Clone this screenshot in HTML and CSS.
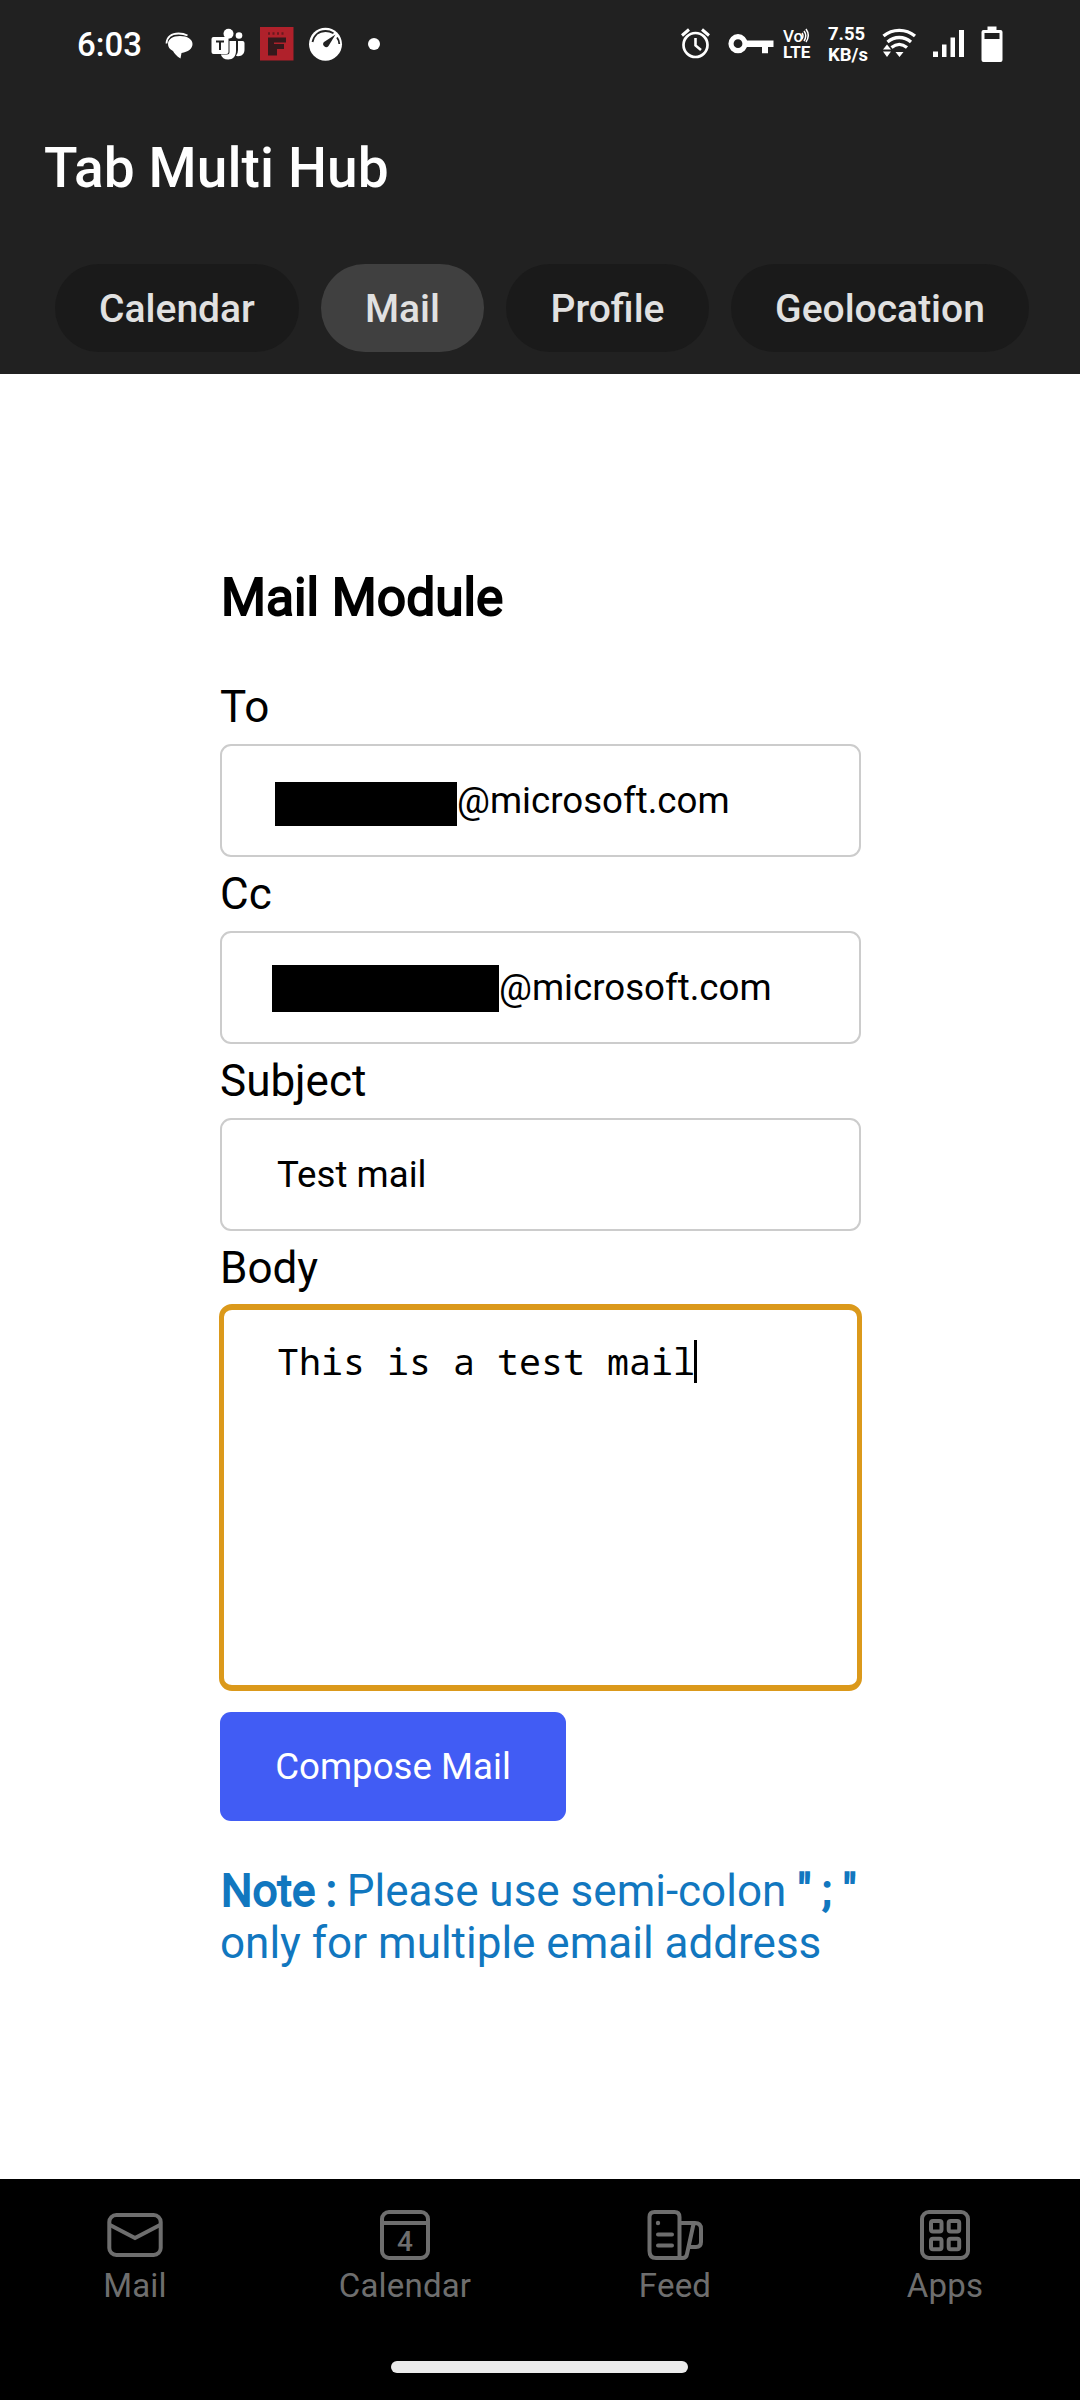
FILE: index.html
```html
<!DOCTYPE html>
<html lang="en">
<head>
<meta charset="utf-8">
<title>Tab Multi Hub</title>
<link rel="stylesheet" href="styles.css">
</head>
<body>
<header class="header">
  <div class="status">
    <div class="status-left">
      <span class="clock">6:03</span>
      <svg class="chat" width="28" height="40" viewBox="165 24 28 40"><path d="M180 36c7.500 0 12.500 3.300 12.500 8s-4.500 8-11 9l-1 5.500c-4-2.500-6-5-7.500-7.500-3.500-1.700-5-4-5-7 0-4.700 4.500-8 12-8z" fill="#fff"/><path d="M166.500 43.500c.3-6.500 5.200-10 12-10 3.500 0 6.500.7 9 2" fill="none" stroke="#fff" stroke-width="1.800"/></svg>
      <svg class="teams" width="34" height="40" viewBox="211 24 34 40"><g fill="#fff"><circle cx="228.500" cy="33.800" r="5"/><circle cx="239" cy="35.500" r="3.300"/><path d="M229.500 41h6.500v10c0 5-3 8.500-7.800 8.500-4 0-6.400-2-7.400-5h6.200q2.500 0 2.500-2.500zM238 41h4.500q2 0 2 2v6.500c0 4-2.300 6.700-6.500 6.700-.9 0-1.500-.2-2-.4q2-2.500 2-5.800z"/><rect x="211.500" y="37" width="17" height="17" rx="2"/></g><path d="M216 41.500h8M220 41.500v8.500" stroke="#222" stroke-width="2" fill="none"/></svg>
      <svg class="flip" width="34" height="40" viewBox="260 24 34 40"><path d="M260 27h33.500v33.500H260z" fill="#b0212b"/><path d="M268 37.500h18v5h-12v1.500h10v5h-7v6.500h-9z" fill="#35191c"/><path d="M268 33.500h18" stroke="#69191f" stroke-width="2.500" stroke-dasharray="2 2.500"/></svg>
      <svg class="gauge" width="34" height="40" viewBox="309 24 34 40"><circle cx="325.500" cy="44.200" r="16.500" fill="#fff"/><path d="M312.500 42c1.500-7 6.500-11 13-11 3 0 5.500.8 8 2.200M337 37.500q2.300 3 2.300 6.500" fill="none" stroke="#222" stroke-width="1.800"/><path d="M335.500 34.500l-7 11.500a3 3 0 1 1-4.500-4z" fill="#222"/></svg>
      <svg class="dot" width="12" height="40" viewBox="368 24 12 40"><circle cx="374" cy="44" r="6" fill="#fff"/></svg>
    </div>
    <div class="status-right">
      <svg width="29" height="40" viewBox="681 24 29 40"><g fill="none" stroke="#fff"><circle cx="695.500" cy="45" r="12" stroke-width="2.700"/><path d="M695.500 38v7.500l5.500 4.500" stroke-width="2.600"/><path d="M682 35.500l7-6M709 35.500l-7-6" stroke-width="3"/></g></svg>
      <svg width="46" height="40" viewBox="728 24 46 40"><circle cx="738" cy="43.700" r="7" fill="none" stroke="#fff" stroke-width="5.200"/><path d="M746 40.500h27.500v6.500h-5.500v6.300h-6V47h-16z" fill="#fff"/></svg>
      <div class="volte"><span>Vo<svg class="waves" width="8" height="15" viewBox="0 0 8 15"><path d="M1 5q2 2.500 0 6M3 3q3.500 4.500 0 10M5 1q4.500 6.500 0 13" fill="none" stroke="#fff" stroke-width="1.500"/></svg></span><span>LTE</span></div>
      <div class="speed"><span>7.55</span><span>KB/s</span></div>
      <svg class="wifi" width="36" height="40" viewBox="882 24 36 40"><g fill="none" stroke="#fff" stroke-width="3.300"><path d="M883.500 36c9-7.500 22.500-7.500 31.500 0"/><path d="M887.500 42c7-6 16.500-6 23.500 0"/><path d="M891.500 47.500c5-4 10.500-4 15.500 0"/></g><path d="M895.500 52h8l-4 5zM883 49.500h8l-4-5zM883 51.500h8l-4 5.500z" fill="#fff"/></svg>
      <svg class="signal" width="32" height="40" viewBox="933 24 32 40"><path d="M933 51.500h5V57h-5zM942 44.500h4.500V57H942zM950.500 37.500h4.500V57h-4.500zM959 30h5v27h-5z" fill="#fff"/></svg>
      <svg class="battery" width="22" height="40" viewBox="981.500 24 22 40"><path fill-rule="evenodd" d="M988 26.500h9V30h4q2 0 2 2v28q0 2-2 2h-17q-2 0-2-2V32q0-2 2-2h4zM985 33v6h15v-6z" fill="#fff"/></svg>
    </div>
  </div>
  <h1 class="title">Tab Multi Hub</h1>
  <nav class="chips">
    <a class="chip chip-calendar">Calendar</a>
    <a class="chip chip-mail active">Mail</a>
    <a class="chip chip-profile">Profile</a>
    <a class="chip chip-geo">Geolocation</a>
  </nav>
</header>
<main class="main">
  <form class="form">
    <h2 class="heading">Mail Module</h2>
    <label class="label">To</label>
    <div class="field"><span class="redact redact-to"></span><span>@microsoft.com</span></div>
    <label class="label">Cc</label>
    <div class="field"><span class="redact redact-cc"></span><span>@microsoft.com</span></div>
    <label class="label">Subject</label>
    <div class="field field-subject"><span>Test mail</span></div>
    <label class="label">Body</label>
    <div class="area"><span class="area-text">This is a test mail</span><span class="caret"></span></div>
    <button class="compose" type="button">Compose Mail</button>
    <p class="note"><b>Note :</b> Please use semi-colon <b>" ; "</b><br>only for multiple email address</p>
  </form>
</main>
<footer class="footer">
  <nav class="tabs">
    <a class="tab"><svg width="60" height="54" viewBox="105 2208 60 54"><g fill="none" stroke="#6e6e6e" stroke-width="4"><rect x="109.300" y="2215" width="51.400" height="40" rx="7"/><path d="M110 2225l25 13 25-13"/></g></svg><span>Mail</span></a>
    <a class="tab"><svg width="60" height="54" viewBox="375 2208 60 54"><g fill="none" stroke="#6e6e6e" stroke-width="4"><rect x="382" y="2212" width="46" height="46" rx="7"/><path d="M382 2223h46"/></g><text class="day" x="405" y="2250.500" text-anchor="middle">4</text></svg><span>Calendar</span></a>
    <a class="tab"><svg width="60" height="54" viewBox="645 2208 60 54"><g fill="none" stroke="#6e6e6e" stroke-width="4" stroke-linecap="round" stroke-linejoin="round"><path d="M680 2258h-24q-6.500 0-6.500-7v-34q0-5 5-5h20q5 0 5 5v41h3q4 0 4.500-4l6.500-30M680 2223h15q6 0 6 6v13q0 5-5 5h-7"/><path d="M658 2234.500h14M658 2245.500h14"/></g><circle cx="658" cy="2223" r="2.200" fill="#6e6e6e"/></svg><span>Feed</span></a>
    <a class="tab"><svg width="60" height="54" viewBox="915 2208 60 54"><g fill="none" stroke="#6e6e6e" stroke-width="4"><rect x="922" y="2212" width="46" height="46" rx="7"/><rect x="931" y="2221" width="10.500" height="10.500" rx="2"/><rect x="948.700" y="2221" width="10.500" height="10.500" rx="2"/><rect x="931" y="2238.700" width="10.500" height="10.500" rx="2"/><rect x="948.700" y="2238.700" width="10.500" height="10.500" rx="2"/></g></svg><span>Apps</span></a>
  </nav>
  <div class="pill"></div>
</footer>
</body>
</html>
```
FILE: styles.css
```css
* { box-sizing: border-box; }
body { margin: 0; width: 1080px; height: 2400px; background: #fff; font-family: Roboto, sans-serif; color: #000; display: flex; flex-direction: column; overflow: hidden; }
svg { display: block; flex: none; }
.header { height: 374px; background: #212121; color: #fff; padding-top: 24px; flex: none; }
.status { height: 40px; display: flex; justify-content: space-between; padding: 0 77px 0 77px; align-items: center; }
.status-left, .status-right { display: flex; align-items: center; }
.clock { font-size: 33px; font-weight: 500; width: 88px; line-height: 40px; padding-top: 2px; }
.teams { margin-left: 18px; }
.flip, .gauge { margin-left: 15px; }
.dot { margin-left: 25px; }
.status-right { gap: 10px; }
.status-right > svg:nth-child(2) { margin-left: 8px; }
.volte { display: flex; flex-direction: column; width: 35px; margin-left: -1px; font-size: 17px; font-weight: 700; line-height: 16px; }
.volte span { display: flex; }
.volte span:first-child { font-weight: 500; }
.waves { margin-left: -2px; }
.speed { display: flex; flex-direction: column; width: 42px; font-size: 18.500px; font-weight: 700; line-height: 20px; gap: 1px; padding-top: 1px; }
.wifi { margin-left: 2px; }
.signal { margin-left: 5px; }
.battery { margin-left: 6px; }
.title { margin: 71px 0 0 44px; font-size: 55px; line-height: 66px; font-weight: 500; letter-spacing: .1px; }
.chips { display: flex; gap: 22px; margin: 63px 0 0 55px; }
.chip { height: 88px; line-height: 91px; border-radius: 44px; background: #1a1a1a; color: #e1e1e1; text-align: center; font-size: 39px; font-weight: 500; }
.chip-calendar { width: 244px; }
.chip-mail { width: 163px; }
.chip-profile { width: 203px; }
.chip-geo { width: 298px; }
.chip.active { background: #404040; }
.main { flex: 1; padding: 194px 219px 0 220px; }
.form { display: flex; flex-direction: column; }
.heading { margin: 0 0 53px 1px; font-size: 51.500px; line-height: 60px; font-weight: 400; -webkit-text-stroke: 1.900px #000; }
.label { font-size: 44px; line-height: 52px; }
.field { margin: 11px 0; height: 113px; border: 2px solid #ccc; border-radius: 11px; display: flex; align-items: center; font-size: 36.670px; line-height: 44px; padding-left: 50px; }
.redact { background: #000; }
.redact-to { width: 182px; height: 44px; margin: 7px 0 0 3px; }
.redact-cc { width: 227px; height: 47px; margin-top: 2px; }
.field-subject { padding-left: 55px; }
.area { margin: 10px -1px 0; height: 387px; border: 5px solid #db991b; border-top-width: 6px; border-bottom-width: 6px; border-radius: 13px; padding: 30px 0 0 53px; display: flex; align-items: flex-start; }
.area-text { font: 36.670px/42px "Droid Sans Mono", "Noto Sans Mono", "Liberation Mono", monospace; }
.caret { width: 3px; height: 43px; background: #000; margin-left: -1px; }
.compose { margin: 21px 0 45px; width: 346px; height: 109px; border: 0; border-radius: 11px; background: #415cf4; color: #fff; font: 36.670px/44px Roboto, sans-serif; padding: 0; }
.note { margin: 0; font-size: 44px; line-height: 51.600px; color: #1177bf; white-space: nowrap; }
.note b { font-weight: 400; -webkit-text-stroke: 1.800px #1177bf; }
.note b:first-child { margin: 0 -1px 0 1px; }
.footer { height: 221px; background: #000; flex: none; display: flex; flex-direction: column; align-items: center; }
.tabs { display: grid; grid-template-columns: repeat(4, 270px); padding-top: 29px; }
.tab { display: flex; flex-direction: column; align-items: center; color: #6e6e6e; font-size: 33px; line-height: 40px; letter-spacing: .2px; gap: 4px; }
.day { font-size: 28px; fill: #6e6e6e; font-weight: 500; letter-spacing: 0; }
.pill { width: 297px; height: 12px; border-radius: 6px; background: #ebebeb; margin: 55px 1px 0 0; }
```
